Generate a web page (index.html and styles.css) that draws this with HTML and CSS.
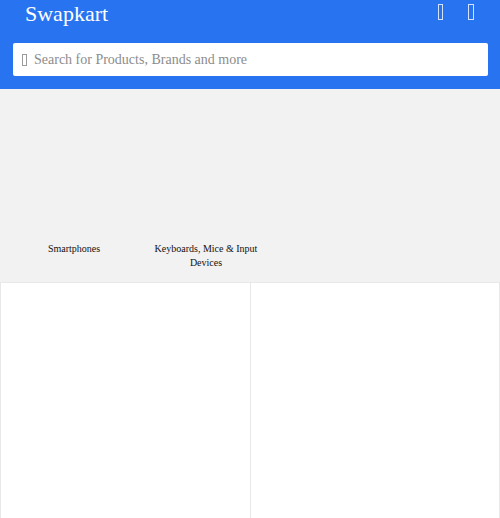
FILE: index.html
```html
<!DOCTYPE html>
<html lang="en">
<head>
    <meta charset="UTF-8">
    <meta name="viewport" content="width=device-width, initial-scale=1.0">
    <title>Swapkart</title>
    <link rel="stylesheet" href="styles.css">
</head>
<body>
    <header class="topbar">
        <div class="topbar-row">
            <a href="#" class="brand">Swapkart</a>
            <div class="topbar-icons">
                <span class="icon"></span>
                <span class="icon icon-wide"></span>
            </div>
        </div>
        <div class="search">
            <span class="search-icon"></span>
            <input type="text" placeholder="Search for Products, Brands and more">
        </div>
    </header>

    <section class="categories">
        <div class="category">
            <div class="category-img"></div>
            <p>Smartphones</p>
        </div>
        <div class="category">
            <div class="category-img"></div>
            <p>Keyboards, Mice &amp; Input Devices</p>
        </div>
    </section>

    <section class="products">
        <div class="product"></div>
        <div class="product"></div>
    </section>
</body>
</html>
```

FILE: styles.css
```css
body {
    font-family: "Liberation Serif", "Times New Roman", serif;
    margin: 0;
    padding: 0;
    background-color: #fff;
}
.topbar {
    background-color: #2874f0;
    padding: 0 12px 13px 13px;
}
.topbar-row {
    display: flex;
    justify-content: space-between;
    align-items: center;
    height: 28px;
    margin-bottom: 15px;
}
.brand {
    color: #fff;
    font-size: 22px;
    text-decoration: none;
    padding-left: 12px;
}
.topbar-icons {
    display: flex;
    align-items: flex-start;
    gap: 25px;
    padding-right: 14px;
    margin-top: -4px;
}
.icon {
    display: block;
    width: 3px;
    height: 14px;
    border: 1px solid rgba(255, 255, 255, 0.8);
}
.icon-wide {
    width: 4px;
}
.search {
    display: flex;
    align-items: center;
    background-color: #fff;
    border-radius: 2px;
    height: 33px;
    padding-left: 9px;
}
.search-icon {
    display: block;
    width: 3px;
    height: 10px;
    border: 1px solid #9a9a9a;
    margin-right: 7px;
}
.search input {
    flex: 1;
    border: none;
    outline: none;
    padding: 0;
    font-family: inherit;
    font-size: 14px;
    color: #333;
    background: transparent;
}
.search input::placeholder {
    color: #8c8c8c;
}
.categories {
    background-color: #f2f2f2;
    display: flex;
    padding: 0 8px 12px 8px;
}
.category {
    width: 132px;
    text-align: center;
}
.category-img {
    height: 153px;
}
.category p {
    font-size: 10px;
    line-height: 14px;
    margin: 0;
    color: #111;
}
.products {
    display: grid;
    grid-template-columns: 1fr 1fr;
}
.product {
    height: 300px;
    border: 1px solid #e8e8e8;
    border-right: none;
}
.product:last-child {
    border-right: 1px solid #e8e8e8;
}
```
